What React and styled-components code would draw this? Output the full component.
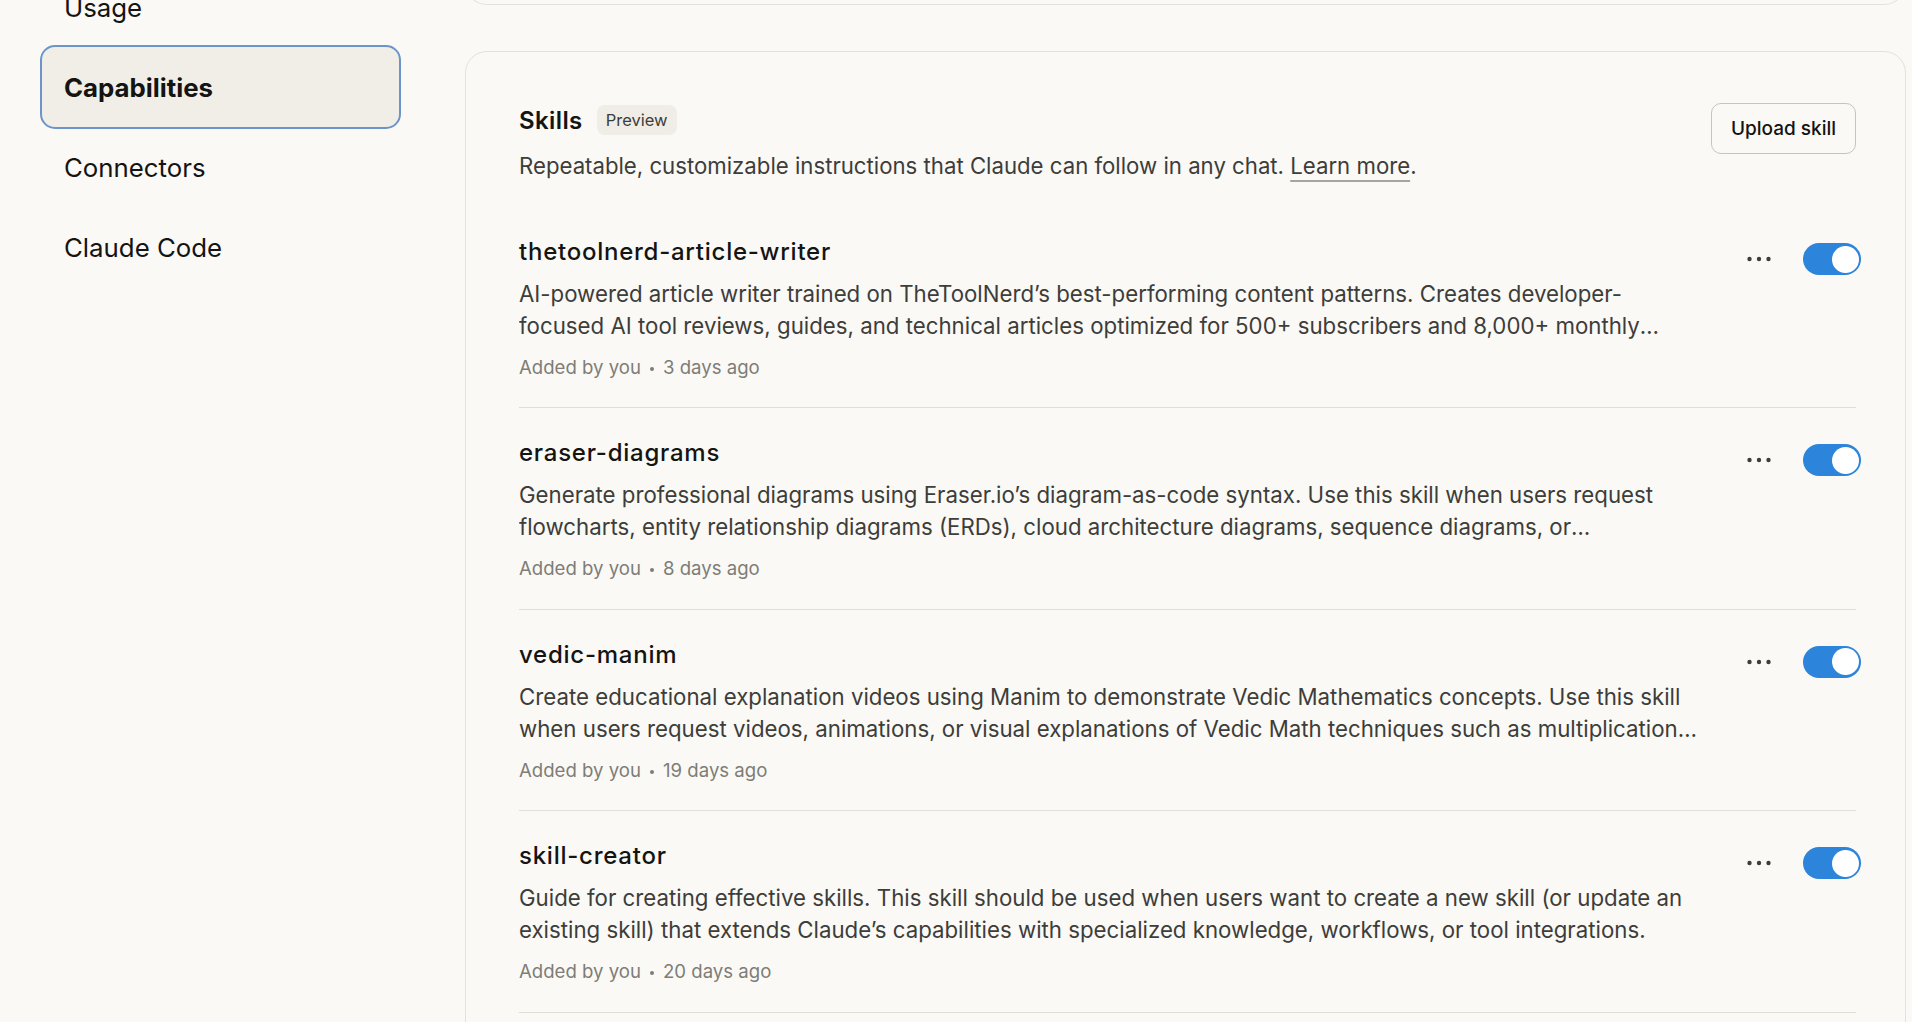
import React from "react";
import styled, { createGlobalStyle } from "styled-components";

const GlobalStyle = createGlobalStyle`
  html, body {
    margin: 0;
    background: #faf9f5;
  }
  body {
    font-family: Inter, "DejaVu Sans", sans-serif;
    color: #141413;
    overflow: hidden;
  }
`;

const Page = styled.div`
  display: grid;
  grid-template-columns: 465px 1fr;
  padding-right: 6px;
  height: 100vh;
  overflow: hidden;
`;

const Sidebar = styled.nav`
  display: flex;
  flex-direction: column;
  width: 357px;
  padding-left: 42px;
  margin-top: -33px;
`;

const NavItem = styled.div`
  height: 80px;
  display: flex;
  align-items: center;
  padding: 0 22px;
  border-radius: 13px;
  font-size: 25.8px;
  font-weight: ${(p) => (p.$active ? 700 : 400)};
  background: ${(p) => (p.$active ? "#f0eee6" : "transparent")};
  outline: ${(p) => (p.$active ? "2.5px solid #6b95c9" : "none")};
`;

const Main = styled.main`
  display: flex;
  flex-direction: column;
  gap: 46px;
  margin-top: -56px;
`;

const PrevCard = styled.div`
  height: 60px;
  border: 1px solid #e3e1d9;
  border-top: none;
  border-radius: 0 0 22px 22px;
`;

const Card = styled.section`
  border: 1px solid #e3e1d9;
  border-radius: 22px;
  padding: 52px 49px 0 53px;
`;

const Header = styled.header`
  display: flex;
  justify-content: space-between;
  align-items: flex-start;
`;

const TitleRow = styled.div`
  display: flex;
  align-items: center;
  gap: 14px;
  height: 32px;
`;

const Heading = styled.h2`
  margin: 0;
  font-size: 24px;
  font-weight: 600;
  letter-spacing: 0.4px;
`;

const Badge = styled.span`
  display: inline-flex;
  align-items: center;
  height: 30px;
  padding: 0 9px;
  border-radius: 8px;
  background: #efede6;
  color: #3d3d3a;
  font-size: 16.5px;
`;

const Intro = styled.p`
  margin: 14px 0 0;
  font-size: 22.2px;
  line-height: 32px;
  color: #3d3d3a;

  a {
    color: inherit;
    text-decoration: underline;
    text-decoration-color: #a8a59e;
    text-underline-offset: 6px;
    text-decoration-thickness: 1.5px;
  }
`;

const UploadButton = styled.button`
  height: 51px;
  margin-top: -1px;
  padding: 0 19px;
  border: 1px solid #c7c4bb;
  border-radius: 10px;
  background: transparent;
  font-family: inherit;
  font-size: 19px;
  font-weight: 500;
  color: #141413;
`;

const SkillList = styled.ul`
  list-style: none;
  margin: 25px 0 0;
  padding: 0;
`;

const SkillRow = styled.li`
  display: grid;
  grid-template-columns: 1179px 1fr;
  padding: 30px 0 27.4px;
  border-bottom: 1px solid #e0ded7;
`;

const SkillName = styled.div`
  font-size: 24px;
  font-weight: 500;
  letter-spacing: 0.75px;
  line-height: 30px;
`;

const SkillDesc = styled.p`
  margin: 11px 0 0;
  font-size: 22.25px;
  line-height: 32px;
  color: #3d3d3a;
  display: -webkit-box;
  -webkit-line-clamp: 2;
  -webkit-box-orient: vertical;
  overflow: hidden;
`;

const Meta = styled.div`
  margin-top: 12px;
  font-size: 18.6px;
  line-height: 26px;
  color: #7e7d77;
  display: flex;
  align-items: center;
`;

const Dot = styled.span`
  width: 4px;
  height: 4px;
  border-radius: 50%;
  background: #7e7d77;
  margin: 4px 9px 0;
`;

const Actions = styled.div`
  justify-self: end;
  display: flex;
  align-items: center;
  gap: 32px;
  margin: 6px -5px 0 0;
  height: 32px;
`;

const Toggle = styled.div`
  position: relative;
  width: 58px;
  height: 32px;
  border-radius: 16px;
  background: ${(p) => (p.$on ? "#2c84db" : "#c7c4bb")};
`;

const Knob = styled.span`
  position: absolute;
  top: 2.5px;
  right: ${(p) => (p.$on ? "2px" : "29px")};
  width: 27px;
  height: 27px;
  border-radius: 50%;
  background: #fff;
`;

const MoreIcon = () => (
  <svg width="24" height="6" viewBox="0 0 24 6" fill="#3d3d3a">
    <circle cx="2.5" cy="3" r="2.2" />
    <circle cx="12" cy="3" r="2.2" />
    <circle cx="21.5" cy="3" r="2.2" />
  </svg>
);

const skills = [
  {
    name: "thetoolnerd-article-writer",
    desc: "AI-powered article writer trained on TheToolNerd’s best-performing content patterns. Creates developer-focused AI tool reviews, guides, and technical articles optimized for 500+ subscribers and 8,000+ monthly active readers.",
    age: "3 days ago",
  },
  {
    name: "eraser-diagrams",
    desc: "Generate professional diagrams using Eraser.io’s diagram-as-code syntax. Use this skill when users request flowcharts, entity relationship diagrams (ERDs), cloud architecture diagrams, sequence diagrams, or infrastructure visualizations.",
    age: "8 days ago",
  },
  {
    name: "vedic-manim",
    desc: "Create educational explanation videos using Manim to demonstrate Vedic Mathematics concepts. Use this skill when users request videos, animations, or visual explanations of Vedic Math techniques such as multiplication shortcuts.",
    age: "19 days ago",
  },
  {
    name: "skill-creator",
    desc: "Guide for creating effective skills. This skill should be used when users want to create a new skill (or update an existing skill) that extends Claude’s capabilities with specialized knowledge, workflows, or tool integrations.",
    age: "20 days ago",
  },
  {
    name: "template-skill",
    desc: "Replace with a description of the skill and when Claude should use it.",
    age: "20 days ago",
  },
];

export default function App() {
  return (
    <>
      <GlobalStyle />
      <Page>
        <Sidebar>
          <NavItem>Usage</NavItem>
          <NavItem $active>Capabilities</NavItem>
          <NavItem>Connectors</NavItem>
          <NavItem>Claude Code</NavItem>
        </Sidebar>
        <Main>
          <PrevCard />
          <Card>
            <Header>
              <div>
                <TitleRow>
                  <Heading>Skills</Heading>
                  <Badge>Preview</Badge>
                </TitleRow>
                <Intro>
                  Repeatable, customizable instructions that Claude can follow in any chat.{" "}
                  <a href="#">Learn more</a>.
                </Intro>
              </div>
              <UploadButton>Upload skill</UploadButton>
            </Header>
            <SkillList>
              {skills.map((s) => (
                <SkillRow key={s.name}>
                  <div>
                    <SkillName>{s.name}</SkillName>
                    <SkillDesc>{s.desc}</SkillDesc>
                    <Meta>
                      Added by you
                      <Dot />
                      {s.age}
                    </Meta>
                  </div>
                  <Actions>
                    <MoreIcon />
                    <Toggle $on>
                      <Knob $on />
                    </Toggle>
                  </Actions>
                </SkillRow>
              ))}
            </SkillList>
          </Card>
        </Main>
      </Page>
    </>
  );
}
